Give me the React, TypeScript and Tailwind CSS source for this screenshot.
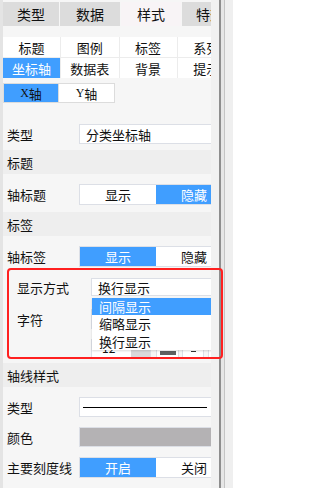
import React from "react";

const font = { fontFamily: '"Noto Sans CJK SC", "Noto Sans", sans-serif' };

function Toggle({ on, left, right }: { on: "left" | "right"; left: string; right: string }) {
  return (
    <div className="flex h-[21px] w-[154px] shrink-0 border border-[#dcdfe6] bg-white">
      <div
        className={`flex w-1/2 items-center justify-center ${on === "left" ? "bg-[#409eff] text-white" : "text-[#111]"}`}
      >
        {left}
      </div>
      <div
        className={`flex w-1/2 items-center justify-center ${on === "right" ? "bg-[#409eff] text-white" : "text-[#111]"}`}
      >
        {right}
      </div>
    </div>
  );
}

function Row({ label, children, className = "" }: { label: string; children: React.ReactNode; className?: string }) {
  return (
    <div className={`flex items-center ${className}`}>
      <div className="w-[76px] shrink-0 pl-[4px]">{label}</div>
      {children}
    </div>
  );
}

function Header({ title, className = "" }: { title: string; className?: string }) {
  return <div className={`flex h-[24px] items-center bg-[#eeeeee] pl-[4px] ${className}`}>{title}</div>;
}

export default function App() {
  const tabs = ["类型", "数据", "样式", "特效"];
  const subTabs = ["标题", "图例", "标签", "系列", "坐标轴", "数据表", "背景", "提示"];

  return (
    <div className="relative flex h-[488px] w-[233px] overflow-hidden bg-[#f6f6f6] text-[13px] leading-none text-[#111]" style={font}>
      {/* left edge */}
      <div className="w-[3px] shrink-0 bg-[#e4e4e4]" />

      {/* panel */}
      <div className="w-[208px] shrink-0 overflow-hidden">
        <div className="w-[240px] pt-[2px]">
          {/* top tabs */}
          <div className="flex gap-px">
            {tabs.map((t) => (
              <div
                key={t}
                className={`flex h-[24px] w-[56px] shrink-0 items-center justify-center text-[14px] ${
                  t === "样式" ? "w-[60px] bg-[#f8f4f6]" : "bg-[#dcdcdc]"
                } ${t === "数据" ? "w-[60px]" : ""}`}
              >
                {t}
              </div>
            ))}
          </div>

          {/* sub tabs */}
          <div className="mt-[11px] grid w-[232px] grid-cols-4 gap-px bg-[#ececec]">
            {subTabs.map((t) => (
              <div
                key={t}
                className={`flex h-[20px] items-center justify-center ${
                  t === "坐标轴" ? "bg-[#409eff] text-white" : "bg-white"
                }`}
              >
                {t}
              </div>
            ))}
          </div>

          {/* axis switch */}
          <div className="mt-[5px] flex">
            <div className="flex h-[20px] w-[56px] items-center justify-center border border-[#dcdcdc] bg-[#409eff] text-[#111]">
              <span style={{ fontFamily: '"Liberation Serif", serif' }} className="text-[12px]">X</span>轴
            </div>
            <div className="flex h-[20px] w-[56px] items-center justify-center border border-l-0 border-[#dcdcdc] bg-white">
              <span style={{ fontFamily: '"Liberation Serif", serif' }} className="text-[12px]">Y</span>轴
            </div>
          </div>

          <Row label="类型" className="mt-[21px]">
            <div className="flex h-[20px] w-[154px] items-center border border-[#dcdfe6] bg-white pl-[6px]">分类坐标轴</div>
          </Row>

          <Header title="标题" className="mt-[6px]" />
          <Row label="轴标题" className="pt-[10px] pb-[7px]">
            <Toggle on="right" left="显示" right="隐藏" />
          </Row>

          <Header title="标签" />
          <Row label="轴标签" className="pt-[10px]">
            <Toggle on="left" left="显示" right="隐藏" />
          </Row>

          {/* label display group */}
          <div className="pl-[14px]">
            <div className="mt-[11px] flex items-center">
              <div className="w-[74px] shrink-0">显示方式</div>
              <div className="relative">
                <div className="flex h-[18px] w-[140px] items-center border border-[#dcdfe6] bg-white pl-[6px]">换行显示</div>
                <div className="absolute left-px top-full z-10 mt-[2px] w-[140px] bg-white shadow-[0_1px_2px_rgba(0,0,0,0.15)]">
                  <div className="flex h-[17px] items-center bg-[#409eff] pl-[7px] text-white">间隔显示</div>
                  <div className="flex h-[17px] items-center pl-[7px]">缩略显示</div>
                  <div className="flex h-[18px] items-center pl-[7px]">换行显示</div>
                </div>
              </div>
            </div>

            <div className="mt-[13px] flex items-start">
              <div className="mt-[4px] w-[74px] shrink-0">字符</div>
              <div className="flex flex-col gap-[10px]">
                <div className="flex h-[20px] gap-[3px]">
                  <div className="w-[60px] border border-[#dcdfe6] bg-white" />
                  <div className="w-[60px] border border-[#dcdfe6] bg-white" />
                </div>
                <div className="flex h-[20px] items-stretch">
                  <div className="flex w-[60px] border border-[#dcdfe6] bg-white">
                    <div className="flex-1 pl-[10px] pt-[2px] text-[12px]">12</div>
                    <div className="w-[19px] bg-[#d9d9db]" />
                  </div>
                  <div className="ml-[5px] flex w-[23px] items-end justify-center border border-[#dcdfe6] bg-white pb-[3px]">
                    <div className="h-[4px] w-[16px] bg-[#5f6061]" />
                  </div>
                  <div className="ml-[3px] flex w-[22px] items-start justify-center border border-[#dcdfe6] bg-white pt-[11px]">
                    <div className="h-px w-[5px] bg-[#333]" />
                  </div>
                  <div className="ml-[4px] w-[22px] border border-[#dcdfe6] bg-white" />
                </div>
              </div>
            </div>
          </div>

          <Header title="轴线样式" className="mt-[4px]" />
          <Row label="类型" className="mt-[10px]">
            <div className="flex h-[20px] w-[154px] items-center border border-[#dcdfe6] bg-white">
              <div className="ml-[3px] h-px w-[124px] bg-black" />
            </div>
          </Row>
          <Row label="颜色" className="mt-[10px]">
            <div className="h-[20px] w-[154px] border border-[#dcdfe6] bg-[#b4b2b4]" />
          </Row>
          <Row label="主要刻度线" className="mt-[10px]">
            <Toggle on="left" left="开启" right="关闭" />
          </Row>
        </div>
      </div>

      {/* scroll area */}
      <div className="flex shrink-0 grow">
        <div className="w-[8px] bg-[#f1f1f1]" />
        <div className="w-[2px] bg-[#8e8e8e]" />
        <div className="w-[3px] bg-[#e6e6e6]" />
        <div className="w-px bg-[#c4c4c4]" />
        <div className="grow bg-[#efefef]" />
      </div>

      {/* annotation */}
      <div className="pointer-events-none absolute left-[7px] top-[268px] h-[91px] w-[216px] rounded-[4px] border-2 border-[#ff2020]" />
    </div>
  );
}
